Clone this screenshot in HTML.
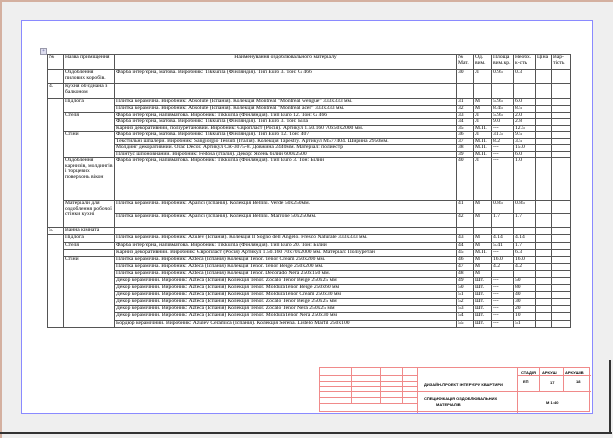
<!DOCTYPE html>
<html><head><meta charset="utf-8"><style>
html,body{margin:0;padding:0}
body{width:613px;height:438px;background:#efefef;position:relative;overflow:hidden;font-family:"Liberation Serif",serif}
.frame{position:absolute;left:0;top:0;width:611px;height:436px;border-left:2px solid #d4b0a0;border-top:2px solid #d4b0a0}
.page{position:absolute;left:21px;top:20px;width:570px;height:392px;background:#fff;border:1px solid #8a8aff}
.bl{position:absolute;left:0;top:432px;width:612px;height:2px;background:#333}
.rl{position:absolute;left:609px;top:360px;width:2px;height:74px;background:#333}
table.t{position:absolute;left:47px;top:54px;width:523px;border-collapse:collapse;table-layout:fixed;font-size:5.6px;line-height:5.5px;color:#000}
.t td{border:1px solid #555;padding:0 1px;vertical-align:top;overflow:hidden;white-space:nowrap}
.t td.w{white-space:normal}
.anc{position:absolute;left:40px;top:48px;width:5px;height:5px;border:1px solid #99a;background:#dde;font-size:5px;line-height:5px;text-align:center;color:#448}
.tb{position:absolute;left:319px;top:367px;width:271px;height:45px;border:1px solid #f08a8a;box-sizing:border-box}
.tb div{position:absolute;background:#f08a8a}
.tb span{position:absolute;font-family:"Liberation Sans",sans-serif;font-weight:bold;font-size:4px;color:#000;white-space:nowrap}
</style></head><body>
<div class="frame"></div>
<div class="page"></div>
<div class="bl"></div><div class="rl"></div>
<div class="anc">+</div>
<table class="t">
<colgroup><col style="width:16px"><col style="width:51px"><col style="width:342px"><col style="width:17px"><col style="width:18px"><col style="width:22px"><col style="width:22px"><col style="width:16px"><col style="width:19px"></colgroup>
<tr style="height:15px"><td>№</td><td class="w">Назва приміщення</td><td style="text-align:center">Найменування оздоблювального матеріалу</td><td class="w">№ Мат.</td><td class="w">Од. вим.</td><td class="w">Площа вим.кр.</td><td class="w">Необх. к-сть</td><td>Ціна</td><td class="w">Вар-тість</td></tr>
<tr style="height:14px"><td></td><td class="w">Оздоблення пилових коробів.</td><td>Фарба інтер'єрна, матова. Виробник: Tikkurila (Фінляндія). Тип Euro 3. Тон: G 466</td><td>30</td><td>Л</td><td>0.95</td><td>0.3</td><td></td><td></td></tr>
<tr style="height:15px"><td>4.</td><td class="w">Кухня об'єднана з балконом</td><td></td><td></td><td></td><td></td><td></td><td></td><td></td></tr>
<tr style="height:6px"><td rowspan="12"></td><td rowspan="2">Підлога</td><td>Плитка керамічна. Виробник: Absolute (Іспанія). Колекція Montreal "Montreal wengue" 333x333 мм.</td><td>31</td><td>М</td><td>5.95</td><td>6.0</td><td></td><td></td></tr>
<tr style="height:7px"><td>Плитка керамічна. Виробник: Absolute (Іспанія). Колекція Montreal "Montreal acer" 333x333 мм.</td><td>32</td><td>М</td><td>8.45</td><td>8.5</td><td></td><td></td></tr>
<tr style="height:6px"><td rowspan="3">Стеля</td><td>Фарба інтер'єрна, напівматова. Виробник: Tikkurila (Фінляндія). Тип Euro 12. Тон: G 466</td><td>33</td><td>Л</td><td>5.95</td><td>2.0</td><td></td><td></td></tr>
<tr style="height:6px"><td>Фарба інтер'єрна, матова. Виробник: Tikkurila (Фінляндія). Тип Euro 3. Тон: Біла</td><td>34</td><td>Л</td><td>9.0</td><td>2.8</td><td></td><td></td></tr>
<tr style="height:6px"><td>Карниз декоративний, поліуретановий. Виробник: Європласт (Росія). Артикул 1.50.160 70x50x2000 мм.</td><td>35</td><td>М.П.</td><td>---</td><td>12.5</td><td></td><td></td></tr>
<tr style="height:5px"><td rowspan="4">Стіни</td><td>Фарба інтер'єрна, матова. Виробник: Tikkurila (Фінляндія). Тип Euro 12. Тон: 407</td><td>36</td><td>Л</td><td>31.5</td><td>9.5</td><td></td><td></td></tr>
<tr style="height:6px"><td>Текстильні шпалери. Виробник: Sangiorgio Tessuti (Італія). Колекція Tapestry. Артикул M577404. Ширина 2950мм.</td><td>37</td><td>М.П.</td><td>8.2</td><td>3.5</td><td></td><td></td></tr>
<tr style="height:6px"><td>Молдинг декоративний. Orac Decor. Артикул CR-3075-8. Довжина 2440мм. Матеріал: полиестр</td><td>38</td><td>М.П.</td><td>---</td><td>15.0</td><td></td><td></td></tr>
<tr style="height:6px"><td>Плінтус шпоновнаний. Виробник: Fedosa (Італія). Декор: Ясень білий 600x2500</td><td>39</td><td>М.П.</td><td>---</td><td>6.0</td><td></td><td></td></tr>
<tr style="height:43px"><td class="w">Оздоблення карнизів, молдингів і торцевих поверхонь вікон</td><td>Фарба інтер'єрна, напівматова. Виробник: Tikkurila (Фінляндія). Тип Euro 3. Тон: Білий</td><td>40</td><td>Л</td><td>---</td><td>1.0</td><td></td><td></td></tr>
<tr style="height:13px"><td rowspan="2" class="w">Матеріали для оздоблення робочої стінки кухні</td><td>Плитка керамічна. Виробник: Aparici (Іспанія). Колекція Bellini. Verde 50x250мм.</td><td>41</td><td>М</td><td>0.85</td><td>0.85</td><td></td><td></td></tr>
<tr style="height:14px"><td>Плитка керамічна. Виробник: Aparici (Іспанія). Колекція Bellini. Marrone 50x250мм.</td><td>42</td><td>М</td><td>1.7</td><td>1.7</td><td></td><td></td></tr>
<tr style="height:7px"><td>5.</td><td>Ванна кімната</td><td></td><td></td><td></td><td></td><td></td><td></td><td></td></tr>
<tr style="height:8px"><td rowspan="13"></td><td>Підлога</td><td>Плитка керамічна. Виробник: Azulev (Іспанія). Колекція Il Sogno dell Angelo. Fresco Naturale 333x333 мм.</td><td>43</td><td>М</td><td>4.14</td><td>4.14</td><td></td><td></td></tr>
<tr style="height:7px"><td>Стеля</td><td>Фарба інтер'єрна, напівматова. Виробник: Tikkurila (Фінляндія). Тип Euro 20. Тон: Білий</td><td>44</td><td>М</td><td>5.41</td><td>1.7</td><td></td><td></td></tr>
<tr style="height:7px"><td></td><td>Карниз декоративний. Виробник: Європласт (Росія) Артикул 1.50.160 70x70x2000 мм. Матеріал: Поліуретан</td><td>45</td><td>М.П.</td><td>---</td><td>6.3</td><td></td><td></td></tr>
<tr style="height:7px"><td rowspan="10">Стіни</td><td>Плитка керамічна. Виробник: Azteca (Іспанія) Колекція Tenor. Tenor Cream 250x200 мм.</td><td>46</td><td>М</td><td>16.0</td><td>16.0</td><td></td><td></td></tr>
<tr style="height:6px"><td>Плитка керамічна. Виробник: Azteca (Іспанія) Колекція Tenor. Tenor Beige 250x200 мм.</td><td>47</td><td>М</td><td>4.2</td><td>4.2</td><td></td><td></td></tr>
<tr style="height:7px"><td>Плитка керамічна. Виробник: Azteca (Іспанія) Колекція Tenor. Decorado Nera 250x150 мм.</td><td>48</td><td>М</td><td></td><td></td><td></td><td></td></tr>
<tr style="height:7px"><td>Декор керамічний. Виробник: Azteca (Іспанія) Колекція Tenor. Zocalo Tenor Beige 250x25 мм</td><td>49</td><td>Шт.</td><td>---</td><td>50</td><td></td><td></td></tr>
<tr style="height:7px"><td>Декор керамічний. Виробник: Azteca (Іспанія) Колекція Tenor. MolduraTenor Beige 250x60 мм</td><td>50</td><td>Шт.</td><td>---</td><td>80</td><td></td><td></td></tr>
<tr style="height:7px"><td>Декор керамічний. Виробник: Azteca (Іспанія) Колекція Tenor. MolduraTenor Cream 250x30 мм</td><td>51</td><td>Шт.</td><td>---</td><td>40</td><td></td><td></td></tr>
<tr style="height:7px"><td>Декор керамічний. Виробник: Azteca (Іспанія) Колекція Tenor. Zocalo Tenor Beige 250x25 мм</td><td>52</td><td>Шт.</td><td>---</td><td>30</td><td></td><td></td></tr>
<tr style="height:7px"><td>Декор керамічний. Виробник: Azteca (Іспанія) Колекція Tenor. Zocalo Tenor Nera 250x25 мм</td><td>53</td><td>Шт.</td><td>---</td><td>20</td><td></td><td></td></tr>
<tr style="height:8px"><td>Декор керамічний. Виробник: Azteca (Іспанія) Колекція Tenor. MolduraTenor Nera 250x30 мм</td><td>54</td><td>Шт.</td><td>---</td><td>10</td><td></td><td></td></tr>
<tr style="height:7px"><td>Бордюр керамічний. Виробник: Azulev Ceramica (Іспанія). Колекція Serena. Listelo Marfil 250x100</td><td>55</td><td>Шт.</td><td>---</td><td>51</td><td></td><td></td></tr>
</table>
<div class="tb">
<div style="left:31px;top:0;width:1px;height:36px"></div>
<div style="left:60px;top:0;width:1px;height:36px"></div>
<div style="left:82px;top:0;width:1px;height:36px"></div>
<div style="left:97px;top:0;width:1px;height:45px"></div>
<div style="left:197px;top:0;width:1px;height:45px"></div>
<div style="left:219px;top:0;width:1px;height:23px"></div>
<div style="left:243px;top:0;width:1px;height:23px"></div>
<div style="left:0;top:7px;width:97px;height:1px"></div>
<div style="left:0;top:13px;width:97px;height:1px"></div>
<div style="left:0;top:18px;width:97px;height:1px"></div>
<div style="left:0;top:23px;width:271px;height:1px"></div>
<div style="left:0;top:29px;width:97px;height:1px"></div>
<div style="left:0;top:35px;width:97px;height:1px"></div>
<div style="left:197px;top:7px;width:74px;height:1px"></div>
<span style="left:104px;top:14px">ДИЗАЙН-ПРОЕКТ ІНТЕР'ЄРУ КВАРТИРИ</span>
<span style="left:104px;top:28px">СПЕЦИФІКАЦІЯ ОЗДОБЛЮВАЛЬНИХ</span>
<span style="left:116px;top:34px">МАТЕРІАЛІВ</span>
<span style="left:201px;top:2px">СТАДІЯ</span>
<span style="left:222px;top:2px">АРКУШ</span>
<span style="left:245px;top:2px">АРКУШІВ</span>
<span style="left:203px;top:11px">ЕП</span>
<span style="left:230px;top:12px">17</span>
<span style="left:256px;top:11px">18</span>
<span style="left:226px;top:32px">М 1:40</span>
</div>
</body></html>
